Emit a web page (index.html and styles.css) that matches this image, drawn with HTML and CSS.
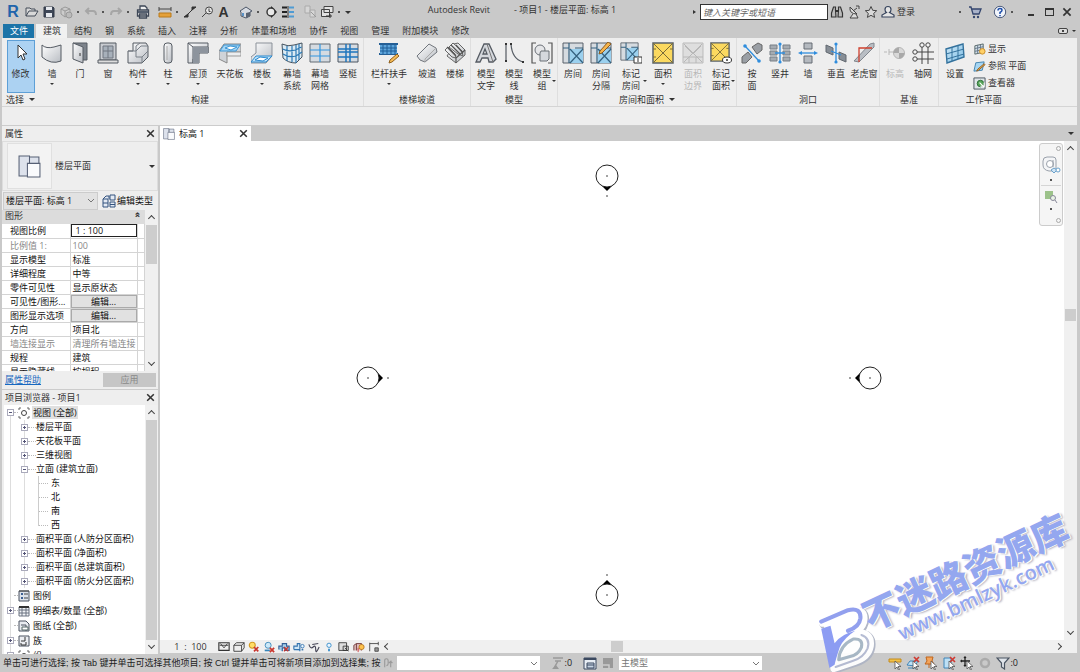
FILE: index.html
```html
<!DOCTYPE html>
<html lang="zh-CN">
<head>
<meta charset="utf-8">
<title>Autodesk Revit - 项目1 - 楼层平面: 标高 1</title>
<link rel="stylesheet" href="styles.css">
</head>
<body>
<svg class="sprite" aria-hidden="true">
  <defs>
    <linearGradient id="g" x1="0" y1="0" x2="1" y2="1"><stop offset="0" stop-color="#fff"/><stop offset="1" stop-color="#b9bdc3"/></linearGradient>
    <linearGradient id="gb" x1="0" y1="0" x2="1" y2="1"><stop offset="0" stop-color="#cfe9f8"/><stop offset="1" stop-color="#7fbfe6"/></linearGradient>
    <symbol id="open" viewBox="0 0 14 14"><path d="M1 11V3h4l1 1h4v2M1 11l3-5h9l-3 5z" fill="#d8d8d8" stroke="#444c58"/></symbol>
    <symbol id="save" viewBox="0 0 14 14"><path d="M2 2h9l1 1v9H2z" fill="#3e4757" stroke="#333b49"/><path d="M4 2h6v3H4zM4 8h6v4H4z" fill="#e6e9ee"/></symbol>
    <symbol id="sync" viewBox="0 0 14 14"><path d="M2 4l4-2 5 2v5l-5 3-4-3zM2 4l4 2 5-2M6 6v6" fill="#ccc" stroke="#999"/><circle cx="10" cy="10" r="3" fill="#bbb" stroke="#999"/></symbol>
    <symbol id="undo" viewBox="0 0 14 14"><path d="M5 3L2 6l3 3M2 6h7q3 0 3 4" fill="none" stroke="#a6a6a6" stroke-width="2"/></symbol>
    <symbol id="redo" viewBox="0 0 14 14"><path d="M9 3l3 3-3 3M12 6H5q-3 0-3 4" fill="none" stroke="#a6a6a6" stroke-width="2"/></symbol>
    <symbol id="print" viewBox="0 0 14 14"><path d="M4 5V1h5l2 2v2M1.500 5h11v6h-11zM3.500 9h7v4h-7z" fill="#eee" stroke="#3e4757" stroke-width="1.300"/><path d="M2 6h10v2H2z" fill="#566070"/></symbol>
    <symbol id="measure" viewBox="0 0 14 14"><path d="M1 4h12M1 2v4M13 2v4" stroke="#444" fill="none"/><path d="M1 8h12v4H1z" fill="#e5a13a" stroke="#b97a1c"/></symbol>
    <symbol id="dim" viewBox="0 0 14 14"><path d="M3 11L11 3" stroke="#333"/><path d="M1 12l4-3v3zM9 5V2h4z" fill="#333" stroke="#333"/></symbol>
    <symbol id="tag" viewBox="0 0 14 14"><circle cx="9" cy="5.500" r="3.500" fill="#e4e4e4" stroke="#444"/><path d="M6 8l-4 4M9 3.500v3h1.500" fill="none" stroke="#444"/></symbol>
    <symbol id="cube" viewBox="0 0 14 14"><path d="M1 6l6-4 6 4-2 1v4l-4 2-5-2V7z" fill="#d7dbe2" stroke="#4c5667"/><path d="M7 8v5l4-2V7z" fill="#5b6472"/><path d="M3 8h2v3H3z" fill="#5a91c5"/></symbol>
    <symbol id="section" viewBox="0 0 14 14"><path d="M7 1l6 6-6 6z" fill="#222"/><circle cx="7" cy="7" r="4" fill="#e8e8e8" stroke="#333" stroke-width="1.400"/></symbol>
    <symbol id="thin" viewBox="0 0 14 14"><path d="M1 2.500h5M1 7h5M1 11.500h5" stroke="#222" stroke-width="2"/><path d="M8 2.500h5M8 7h5M8 11.500h5" stroke="#4f9bd3" stroke-width="2"/><path d="M7 1v12" stroke="#333"/></symbol>
    <symbol id="closeh" viewBox="0 0 14 14"><path d="M2 1h5v7H2zM7 5h5v7H7z" fill="#d6d6d6" stroke="#aaa"/><path d="M8 7l5 5" stroke="#999"/></symbol>
    <symbol id="switchw" viewBox="0 0 14 14"><path d="M4 1.500h9v6H4zM1.500 4.500h8v7h-8z" fill="#e3e3e3" stroke="#444"/><path d="M6 11l6 0M10 9v4" stroke="#333"/></symbol>
    <symbol id="bino" viewBox="0 0 14 14"><path d="M3.500 2h2v3L6 12H1.500V8zM10.500 2h-2v3L8 12h4.500V8z" fill="#bbb" stroke="#333" stroke-width="1.200"/><path d="M5 6h4" stroke="#333" stroke-width="2"/></symbol>
    <symbol id="sat" viewBox="0 0 14 14"><path d="M3 2q-1 7 7 7zM6 6l4-3M6 9l-3 4h8l-2-4" fill="#ddd" stroke="#444"/><path d="M9 1h3v3" fill="none" stroke="#444"/></symbol>
    <symbol id="star" viewBox="0 0 14 14"><path d="M7 1.500l1.700 3.800 4 .4-3 2.700.9 4L7 10.300 3.400 12.400l.9-4-3-2.700 4-.4z" fill="#d9d9d9" stroke="#444"/></symbol>
    <symbol id="user" viewBox="0 0 14 14"><path d="M4 4.500a3 3 0 1 1 6 0q0 2-1.500 3l4.500 2.500v2H1v-2l4.500-2.500Q4 6.500 4 4.500z" fill="#e4e4e4" stroke="#36435c" stroke-width="1.200"/></symbol>
    <symbol id="cart" viewBox="0 0 14 14"><path d="M1 2h2l2 7h6l2-5H4" fill="#a9b3ca" stroke="#34466e" stroke-width="1.300"/><circle cx="6" cy="12" r="1.200" fill="#34466e"/><circle cx="10" cy="12" r="1.200" fill="#34466e"/></symbol>
    <symbol id="help" viewBox="0 0 14 14"><circle cx="7" cy="7" r="5.700" fill="#f2f5fb" stroke="#4b5b7c"/><path d="M5 5.500q0-2 2-2t2 1.700Q9 6.500 7 7.500V9M7 10v1.200" fill="none" stroke="#1e4eaa" stroke-width="1.500"/></symbol>
    <symbol id="x" viewBox="0 0 10 10"><path d="M2 2l6 6M8 2L2 8" stroke="#333" stroke-width="1.400"/></symbol>

    <symbol id="arrow" viewBox="0 0 22 22"><path d="M8 3v13l3-3 2 5 2-1-2-5h4z" fill="#fff" stroke="#333"/></symbol>
    <symbol id="wall" viewBox="0 0 22 22"><path d="M1 3q4 4 12 2l7-2v16q-10 4-19-4z" fill="url(#g)" stroke="#555b63"/></symbol>
    <symbol id="door" viewBox="0 0 22 22"><path d="M4 1h14v17h-4" fill="#7d838b" stroke="#555b63"/><path d="M4 1l10 4v16L4 17z" fill="url(#g)" stroke="#555b63"/><path d="M11 11v3" stroke="#333"/></symbol>
    <symbol id="window" viewBox="0 0 22 22"><path d="M3 1h16v17H3z" fill="#c9ccd1" stroke="#555b63"/><path d="M6 4h10v12H6zM11 4v12M6 9h10" fill="#a7b0ba" stroke="#707780"/><path d="M1 18h20v3H1z" fill="#ddd" stroke="#555b63"/></symbol>
    <symbol id="comp" viewBox="0 0 22 22"><path d="M6 1h13l2 3v11l-6 6H1V9h5z" fill="url(#g)" stroke="#555b63"/><path d="M1 9h8l5-5h7M9 9V4l4-3M9 9v6h6l6-6M15 15v6" fill="none" stroke="#7b8189"/></symbol>
    <symbol id="column" viewBox="0 0 22 22"><rect x="7" y="1" width="8" height="20" rx="3" fill="url(#g)" stroke="#555b63"/><path d="M10 4v14" stroke="#aaa"/></symbol>
    <symbol id="roof" viewBox="0 0 22 22"><path d="M1 1h20v10h-9v10H1z" fill="url(#g)" stroke="#555b63"/><path d="M21 5H6v16M1 1l5 4M6 21v-4M21 11V5" fill="none" stroke="#555b63"/><path d="M6 5h15v6h-9v10H6z" fill="#8d949d"/></symbol>
    <symbol id="ceil" viewBox="0 0 22 22"><path d="M0 9l5-7h17v8H8v11l-8-4z" fill="#cfd3d8" stroke="#888"/><path d="M8 10h14v4H8z" fill="#eceef0" stroke="#999"/><path d="M5 3h16l-4 6H1z" fill="#a4d5f5" stroke="#3c97d6"/><path d="M6 6l5-2 7 1-6 3z" fill="#fff" stroke="#3c97d6"/></symbol>
    <symbol id="floor" viewBox="0 0 22 22"><path d="M5 1h16v13l-6 7H0v-6l5-4z" fill="url(#g)" stroke="#8b9199"/><path d="M5 14h16l-6 6H0z" fill="#bfe2f8" stroke="#2d8bd0"/><path d="M4 18l5-3 8 1-5 3z" fill="#fff" stroke="#2d8bd0"/></symbol>
    <symbol id="csys" viewBox="0 0 22 22"><path d="M1 2q6 3 12 1l8-2v14l-6 6Q7 21 2 16z" fill="#dcebf4" stroke="#44525f"/><path d="M1.500 7q6 3 13 1l6-3M2 12q6 4 13 2l6-4M6 4v15M11 4v16M15 3v18M18 2v16" fill="none" stroke="#2c79b4" stroke-width="1.200"/></symbol>
    <symbol id="cgrid" viewBox="0 0 22 22"><path d="M1 2h20v18H1z" fill="#d5dbe1" stroke="#626a73"/><path d="M11 2v18M1 8h20M1 14h20" stroke="#3296df" stroke-width="1.200"/></symbol>
    <symbol id="mull" viewBox="0 0 22 22"><path d="M1 2h20v18H1z" fill="#d5dbe1" stroke="#4a5561"/><path d="M9 2v18M13 2v18M1 7h20M1 10h20M1 15h20" stroke="#1e76bd" stroke-width="1.500"/></symbol>
    <symbol id="rail" viewBox="0 0 22 22"><path d="M1 2h19M1 12h19" stroke="#245f96" stroke-width="2"/><path d="M2 3h17v9H2z" fill="#5ca4db"/><path d="M5 3v9M9 3v9M13 3v9M17 3v9M2 6h17M2 9h17" stroke="#1f5e98"/><path d="M19 12l2 2-7 6-3 1 1-3z" fill="#f5bc57" stroke="#90601d"/></symbol>
    <symbol id="ramp" viewBox="0 0 22 22"><path d="M1 14L13 2l7 4 1 4L9 20q-6-1-8-6z" fill="url(#g)" stroke="#70757c"/><path d="M9 20v-3L20 6" fill="none" stroke="#aaa"/></symbol>
    <symbol id="stair" viewBox="0 0 22 22"><path d="M1 8l3-3 7 7 1 4-4-1zM5 5l4-4 9 8 1 5-5-2zM10 2l4-1 7 7v5L12 21l-9-7 2-3" fill="url(#g)" stroke="#666"/><path d="M3 5l9 9M7 3l9 9M12 3l7 8M12 21v-5l9-8" fill="none" stroke="#555" stroke-width="1.200"/></symbol>
    <symbol id="mtext" viewBox="0 0 22 22"><path d="M1 20L9 2h5l7 15-3 3h-4l-1-4H7l-2 4zM8 12h4l-2-5z" fill="#d4d7dc" fill-rule="evenodd" stroke="#555b63" stroke-width="1.300"/><path d="M12 2l6 18" fill="none" stroke="#777"/></symbol>
    <symbol id="mline" viewBox="0 0 22 22"><path d="M3 2v17M8 2q1 15 12 18" fill="none" stroke="#555b63" stroke-width="1.200"/><path d="M2 2h2M2 19h2M7 2h2M19 20h2" stroke="#333" stroke-width="2"/></symbol>
    <symbol id="mgroup" viewBox="0 0 22 22"><path d="M5 1H1v20h4M17 1h4v20h-4" fill="none" stroke="#555" stroke-width="1.200"/><circle cx="9" cy="8" r="5" fill="#e5e6e8" stroke="#6b7077"/><path d="M10 9h8v8l-2 2H9v-8z" fill="#d5d8dd" stroke="#6b7077"/></symbol>
    <symbol id="room" viewBox="0 0 22 22"><path d="M1 1h20v20H1z" fill="#d6dbe0" stroke="#59616a"/><path d="M8 7h13v14H8z" fill="#9bd0ee"/><path d="M7 1v20M1 6h6M13 6h8M8 7l13 14M21 7L8 21" fill="none" stroke="#34617f" stroke-width="1.200"/></symbol>
    <symbol id="rsep" viewBox="0 0 22 22"><use href="#room"/><path d="M18 0l3 2-9 9-3 1 1-3z" fill="#f6b54d" stroke="#8d5b20"/></symbol>
    <symbol id="rtag" viewBox="0 0 22 22"><use href="#room" width="19" height="19"/><path d="M14 15h8v6h-8z" fill="#fff" stroke="#333"/><path d="M18 16v4" stroke="#333"/></symbol>
    <symbol id="area" viewBox="0 0 22 22"><path d="M1 1h20v20H1z" fill="#fbd95f" stroke="#59616a" stroke-width="1.500"/><path d="M1 1l20 20M21 1L1 21M1 7h3M18 7h3M1 15h3" stroke="#796c39"/></symbol>
    <symbol id="abound" viewBox="0 0 22 22"><path d="M1 1h20v20H1z" fill="#dedede" stroke="#bbb"/><path d="M2 2l18 18M20 2L2 20M1 15h20M7 15v6M14 15v6M3 4l8 8 8-8" fill="none" stroke="#b8b8b8"/></symbol>
    <symbol id="atag" viewBox="0 0 22 22"><use href="#area" width="20" height="20"/><ellipse cx="17" cy="18" rx="4.500" ry="3" fill="#fff" stroke="#333"/><circle cx="17" cy="18" r="1" fill="#333"/></symbol>
    <symbol id="oface" viewBox="0 0 22 22"><path d="M11 5l6-4 4 2v5l-5 4zM1 15l6-5 4 5-6 6H1z" fill="#9a9fa5" stroke="#666"/><path d="M4 4l14 15" stroke="#2f8ddd" stroke-width="1.300"/><circle cx="4" cy="4" r="1.800" fill="#2f8ddd"/><circle cx="18" cy="19" r="1.800" fill="#2f8ddd"/></symbol>
    <symbol id="shaft" viewBox="0 0 22 22"><path d="M1 3h7v4H1zM14 3h7v4h-7zM1 9h7v4H1zM14 9h7v4h-7zM1 15h7v4H1zM14 15h7v4h-7z" fill="#a5abb1" stroke="#777e86"/><path d="M11 2v18M6 11h10" stroke="#2f8ddd" stroke-width="1.300"/><circle cx="11" cy="2" r="1.600" fill="#2f8ddd"/><circle cx="11" cy="20" r="1.600" fill="#2f8ddd"/></symbol>
    <symbol id="owall" viewBox="0 0 22 22"><path d="M7 1h8v6H7zM7 14h8v7H7z" fill="#b4b9bf" stroke="#666d75"/><path d="M3 11h16" stroke="#2f8ddd" stroke-width="1.300"/><path d="M5 9l-4 2 4 2zM17 9l4 2-4 2z" fill="#2f8ddd"/></symbol>
    <symbol id="overt" viewBox="0 0 22 22"><path d="M1 3l7 3v7l-7-3zM14 10l7 3v7l-7-3z" fill="#878e96" stroke="#626970"/><path d="M11 2v18M6 9l10 4" stroke="#2f8ddd" stroke-width="1.300"/><circle cx="11" cy="2" r="1.600" fill="#2f8ddd"/><circle cx="11" cy="20" r="1.600" fill="#2f8ddd"/></symbol>
    <symbol id="dormer" viewBox="0 0 22 22"><path d="M1 19L17 2l4-1v4L6 20z" fill="#b9bec4" stroke="#81878e"/><path d="M6 20V6h13" fill="none" stroke="#d0402e" stroke-width="1.300"/></symbol>
    <symbol id="level" viewBox="0 0 22 22"><path d="M0 10h3M5 10h5M5 7v6" stroke="#b8b8b8"/><circle cx="15" cy="11" r="5.500" fill="#d8d8d8" stroke="#b5b5b5"/><path d="M15 5.500a5.500 5.500 0 0 0-5.500 5.500H15zM15 11h5.500a5.500 5.500 0 0 1-5.500 5.500z" fill="#a9a9a9"/></symbol>
    <symbol id="grid" viewBox="0 0 22 22"><path d="M10 5v17M16 5v17M5 10h17M5 17h17" stroke="#444"/><g fill="#f4f4f4" stroke="#444"><circle cx="10" cy="3" r="2.200"/><circle cx="16" cy="3" r="2.200"/><circle cx="3" cy="10" r="2.200"/><circle cx="3" cy="17" r="2.200"/></g></symbol>
    <symbol id="wset" viewBox="0 0 22 22"><path d="M2 7l17-5 1 13-17 6z" fill="url(#gb)" stroke="#34729d" stroke-width="1.400"/><path d="M2 12l18-5M3 17l17-5M8 5v14M14 3v14" stroke="#34729d"/></symbol>
    <symbol id="show" viewBox="0 0 14 14"><path d="M2 3l9-2v9l-9 2z" fill="#d3e0ea" stroke="#566"/><path d="M2 6l9-2M2 9l9-2M5 2v9M8 2v9" stroke="#678"/><circle cx="10" cy="9" r="3" fill="#ffd067" stroke="#c98b25"/></symbol>
    <symbol id="rplane" viewBox="0 0 14 14"><path d="M3 3l9-1-2 9-9 1z" fill="#a5d6f4" stroke="#4081ad"/><path d="M12 4l1 1-7 6-2 1 1-2z" fill="#f6b54d" stroke="#8d5b20"/></symbol>
    <symbol id="viewer" viewBox="0 0 14 14"><path d="M1 1h12v12H1z" fill="#dfe5e8" stroke="#47535c"/><circle cx="8" cy="7" r="3.500" fill="#58a65a" stroke="#2a6b35"/><path d="M7 6l5 5M8 10h4V6" fill="none" stroke="#fff" stroke-width="1.200"/></symbol>

    <symbol id="plan" viewBox="0 0 22 22"><path d="M1 1h10v19H1zM11 2h9v7h-9z" fill="#dde2ec" stroke="#566075"/><path d="M9 8h12v13H9z" fill="#fafbfd" stroke="#566075"/></symbol>
    <symbol id="etype" viewBox="0 0 14 14"><path d="M1 5h5v8H1zM1 5l3-3h3v3M8 1h5v5H8zM8 8h5v5H8zM8 10.500h5M1 9h5" fill="#e4eaf3" stroke="#33527e"/></symbol>
    <symbol id="views" viewBox="0 0 12 12"><path d="M3 1H1v2M9 1h2v2M1 9v2h2M11 9v2H9" fill="none" stroke="#666"/><circle cx="6" cy="6" r="2.500" fill="#fff" stroke="#444"/></symbol>
    <symbol id="legend" viewBox="0 0 12 12"><path d="M1 1h10v10H1z" fill="#dbe1ea" stroke="#4b5360"/><path d="M3 3h2v2H3zM3 7h2v2H3z" fill="#3c5f92"/><path d="M6 4h4M6 8h4M1 1h10" stroke="#444"/></symbol>
    <symbol id="sched" viewBox="0 0 12 12"><path d="M1 2h10v9H1zM1 5h10M1 8h10M4 2v9M8 2v9" fill="#f2f4f7" stroke="#6b7380"/><path d="M1 2h10" stroke="#333" stroke-width="2"/></symbol>
    <symbol id="sheet" viewBox="0 0 12 12"><path d="M1 1h7l3 3v7H1zM3 5h5v6" fill="#e8ebf0" stroke="#4b5360"/><path d="M4 7h6v3H4z" fill="#fff" stroke="#566"/></symbol>
    <symbol id="family" viewBox="0 0 12 12"><path d="M1 1h10v10H1z" fill="#eceef2" stroke="#4b5360"/><path d="M7 2v4H3M8 7v3H3V8" fill="none" stroke="#333"/></symbol>

    <symbol id="v1" viewBox="0 0 14 14"><path d="M1 2h12v9H1z" fill="#eee" stroke="#333" stroke-width="1.300"/><path d="M2 5h10M3 3l4 5 4-5" fill="none" stroke="#333"/></symbol>
    <symbol id="v2" viewBox="0 0 14 14"><path d="M1 5l3-3h9v6l-3 4H1zM1 5h9l3-3M10 5v7" fill="#eee" stroke="#333"/></symbol>
    <symbol id="v3" viewBox="0 0 14 14"><circle cx="5" cy="5" r="3.500" fill="#ffdd67" stroke="#d39a22" stroke-width="1.300"/><path d="M7 7l5 5M12 7l-5 5" stroke="#c9362d" stroke-width="2"/></symbol>
    <symbol id="v4" viewBox="0 0 14 14"><circle cx="6" cy="5" r="3.500" fill="#cce8f8" stroke="#3684b8"/><path d="M2 11h6" stroke="#3684b8" stroke-width="2"/><path d="M8 8l5 5M13 8l-5 5" stroke="#c9362d" stroke-width="2"/></symbol>
    <symbol id="v5" viewBox="0 0 14 14"><path d="M1 10V6h4V3h5v3h3v5H8V8H5v4" fill="#a5d0ec" stroke="#345f96" stroke-width="1.300"/><path d="M7 7l5 5M12 7l-5 5" stroke="#c9362d" stroke-width="1.500"/></symbol>
    <symbol id="v6" viewBox="0 0 14 14"><path d="M1 10V6h4V3h3v9M1 10h7" fill="#cfe6f6" stroke="#3473ae" stroke-width="1.300"/><circle cx="11" cy="6" r="2" fill="#eaf6ff" stroke="#3473ae"/><path d="M10 9h2v2h-2z" fill="#3473ae"/></symbol>
    <symbol id="v7" viewBox="0 0 14 14"><path d="M1 4q2 6 5 3t3 3 4-3M5 4l7-1" fill="none" stroke="#445" stroke-width="1.300"/></symbol>
    <symbol id="v8" viewBox="0 0 14 14"><circle cx="7" cy="5" r="2.500" fill="#eaf6ff" stroke="#2d87c7"/><path d="M6 9h2v3H6z" fill="#2d87c7"/></symbol>
    <symbol id="v9" viewBox="0 0 14 14"><path d="M1 2h9v9H1zM6 6h6v5H6z" fill="#ddd" stroke="#333"/><path d="M8 8l4 4" stroke="#333"/></symbol>
    <symbol id="v10" viewBox="0 0 14 14"><path d="M1 11V5l3-2h6v8M4 3v8" fill="#dbb" stroke="#6b3030"/><circle cx="10" cy="7" r="3" fill="#ffc34f" stroke="#b8771b"/><path d="M6 8v5" stroke="#c33"/></symbol>
    <symbol id="v11" viewBox="0 0 14 14"><path d="M2 12V2M2 3h10M12 1v4M8 8h4v4H8z" fill="#999" stroke="#444"/></symbol>

    <symbol id="wheel" viewBox="0 0 20 20"><path d="M2 6q0-4 4-4h6q3 0 3 3v9l-4 2H8q-6-1-6-6z" fill="#f4f5f7" stroke="#9aa1ab"/><circle cx="9" cy="9" r="3.500" fill="#fff" stroke="#9aa1ab"/><path d="M12 5v7" stroke="#9aa1ab"/><path d="M10 15l3-2 3 2-3 3z" fill="#cfe4f5" stroke="#6ba1ca"/><circle cx="17" cy="15" r="2" fill="#fff" stroke="#6ba1ca"/></symbol>
    <symbol id="zoomr" viewBox="0 0 14 14"><path d="M1 1h8v8H1z" fill="#9cc28a"/><circle cx="9" cy="8" r="2.500" fill="#eaf4e6" stroke="#889"/><path d="M11 10l2 3" stroke="#889"/></symbol>

    <symbol id="s1" viewBox="0 0 14 14"><path d="M2 12V4q0-2 2-2t2 2v4q0 2-2 2M9 12V5l-2 2M9 5l2 2" fill="none" stroke="#999" stroke-width="1.300"/></symbol>
    <symbol id="s2" viewBox="0 0 14 14"><path d="M2 2h10M4 5h6M3 12l4-7" stroke="#999" fill="none" stroke-width="1.500"/><path d="M1 13l4-4 3 4z" fill="#999"/></symbol>
    <symbol id="s3" viewBox="0 0 14 14"><path d="M1 2h12v11H1z" fill="#e8edf4" stroke="#3b4960"/><path d="M1 3h12" stroke="#3b4960" stroke-width="2"/><path d="M4 7h7v5H4zM4 9h7" fill="#c9d6e5" stroke="#3b4960"/></symbol>
    <symbol id="s4" viewBox="0 0 14 14"><path d="M2 2h10v10H2z" fill="#999"/><path d="M2 9h6v4" fill="none" stroke="#ccc" stroke-width="1.500"/></symbol>
    <symbol id="cur" viewBox="0 0 14 14"><path d="M7 5v8l2-2 1.500 3 1-.5-1.500-3h3z" fill="#fff" stroke="#555" stroke-width=".8"/></symbol>
    <symbol id="t1" viewBox="0 0 14 14"><path d="M1 3h12v3H1z" fill="#f1c24a" stroke="#c48a1a"/><use href="#cur"/></symbol>
    <symbol id="t2" viewBox="0 0 14 14"><path d="M1 9l3-4h8l-3 5zM2 12h8" fill="#bde0f5" stroke="#3f84b8"/><path d="M8 1l5 5M13 1L8 6" stroke="#cf3a32" stroke-width="1.700"/><use href="#cur"/></symbol>
    <symbol id="t3" viewBox="0 0 14 14"><path d="M2 1h7L8 5l2 3H1l2-3zM5 8v4" fill="#f3a45b" stroke="#c0651b"/><use href="#cur"/></symbol>
    <symbol id="t4" viewBox="0 0 14 14"><path d="M2 2h7v10H2z" fill="#bde0f5" stroke="#3f84b8"/><path d="M8 1l5 5M13 1L8 6" stroke="#cf3a32" stroke-width="1.700"/><use href="#cur"/></symbol>
    <symbol id="t5" viewBox="0 0 14 14"><path d="M5 1v9M1 5h9M4 2l1-1 1 1M4 9l1 1 1-1M2 4L1 5l1 1" fill="none" stroke="#222" stroke-width="1.300"/><use href="#cur"/></symbol>
    <symbol id="t6" viewBox="0 0 14 14"><circle cx="7" cy="7" r="4" fill="none" stroke="#aaa" stroke-width="2.500"/></symbol>
    <symbol id="t7" viewBox="0 0 14 14"><path d="M1 2h12L8.500 7v6l-3-2V7z" fill="#dfe4ea" stroke="#4a5462" stroke-width="1.200"/></symbol>
    <symbol id="elev" viewBox="0 0 44 44"><path d="M13 28h18L22 37z" fill="#000"/><circle cx="22" cy="22" r="11" fill="#fff" stroke="#222"/><path d="M21 22h2M21 42h2" stroke="#444"/></symbol>
  </defs>
</svg>

<header class="titlebar">
  <div class="qat">
    <button class="qb logo" aria-label="Revit">R</button>
    <button class="qb" aria-label="打开"><svg><use href="#open"/></svg></button>
    <button class="qb" aria-label="保存"><svg><use href="#save"/></svg></button>
    <button class="qb" aria-label="同步"><svg><use href="#sync"/></svg></button><i class="dd"></i>
    <button class="qb" aria-label="放弃"><svg><use href="#undo"/></svg></button><i class="dd"></i>
    <button class="qb" aria-label="重做"><svg><use href="#redo"/></svg></button><i class="dd"></i>
    <button class="qb near" aria-label="打印"><svg><use href="#print"/></svg></button>
    <button class="qb group" aria-label="测量"><svg><use href="#measure"/></svg></button><i class="dd"></i>
    <button class="qb" aria-label="尺寸标注"><svg><use href="#dim"/></svg></button>
    <button class="qb" aria-label="标记"><svg><use href="#tag"/></svg></button>
    <button class="qb letter" aria-label="文字">A</button>
    <button class="qb group" aria-label="三维视图"><svg><use href="#cube"/></svg></button><i class="dd"></i>
    <button class="qb" aria-label="剖面"><svg><use href="#section"/></svg></button>
    <button class="qb" aria-label="细线"><svg><use href="#thin"/></svg></button>
    <button class="qb group" aria-label="关闭隐藏窗口"><svg><use href="#closeh"/></svg></button>
    <button class="qb" aria-label="切换窗口"><svg><use href="#switchw"/></svg></button><i class="dd"></i>
    <i class="caret wide near"></i>
  </div>
  <h1 class="title"><span>Autodesk Revit</span><span>- 项目1 - 楼层平面: 标高 1</span></h1>
  <div class="infocenter">
    <i class="side"></i>
    <input class="search" type="text" placeholder="键入关键字或短语" aria-label="搜索">
    <button class="qb" aria-label="查找"><svg><use href="#bino"/></svg></button>
    <button class="qb" aria-label="通讯中心"><svg><use href="#sat"/></svg></button>
    <button class="qb" aria-label="收藏"><svg><use href="#star"/></svg></button>
    <button class="login"><svg><use href="#user"/></svg>登录</button>
    <i class="dd"></i>
    <button class="qb near" aria-label="商店"><svg><use href="#cart"/></svg></button>
    <button class="qb far" aria-label="帮助"><svg><use href="#help"/></svg></button><i class="dd"></i>
    <div class="winbtns">
      <button class="wb" aria-label="最小化"><span class="min"></span></button>
      <button class="wb" aria-label="最大化"><span class="max"></span></button>
      <button class="wb" aria-label="关闭"><svg><use href="#x"/></svg></button>
    </div>
  </div>
</header>

<nav class="tabs">
  <button class="tab file">文件</button><button class="tab active">建筑</button><button class="tab">结构</button><button class="tab">钢</button><button class="tab">系统</button><button class="tab">插入</button><button class="tab">注释</button><button class="tab">分析</button><button class="tab">体量和场地</button><button class="tab">协作</button><button class="tab">视图</button><button class="tab">管理</button><button class="tab">附加模块</button><button class="tab">修改</button>
  <button class="collapse" aria-label="最小化功能区"><span></span><i class="caret"></i></button>
</nav>

<section class="ribbon">
  <div class="panel select-panel">
    <div class="tools"><button class="tool on"><svg><use href="#arrow"/></svg>修改</button></div>
    <div class="ptitle">选择<i class="caret wide"></i></div>
  </div>
  <div class="panel">
    <div class="tools">
      <button class="tool"><svg><use href="#wall"/></svg>墙<i class="caret"></i></button>
      <button class="tool"><svg><use href="#door"/></svg>门</button>
      <button class="tool"><svg><use href="#window"/></svg>窗</button>
      <button class="tool w32"><svg><use href="#comp"/></svg>构件<i class="caret"></i></button>
      <button class="tool"><svg><use href="#column"/></svg>柱<i class="caret"></i></button>
      <button class="tool w32"><svg><use href="#roof"/></svg>屋顶<i class="caret"></i></button>
      <button class="tool w32"><svg><use href="#ceil"/></svg>天花板</button>
      <button class="tool w32"><svg><use href="#floor"/></svg>楼板<i class="caret"></i></button>
      <button class="tool"><svg><use href="#csys"/></svg>幕墙<br>系统</button>
      <button class="tool"><svg><use href="#cgrid"/></svg>幕墙<br>网格</button>
      <button class="tool"><svg><use href="#mull"/></svg>竖梃</button>
    </div>
    <div class="ptitle">构建</div>
  </div>
  <div class="panel">
    <div class="tools">
      <button class="tool w48"><svg><use href="#rail"/></svg>栏杆扶手<i class="caret"></i></button>
      <button class="tool"><svg><use href="#ramp"/></svg>坡道</button>
      <button class="tool"><svg><use href="#stair"/></svg>楼梯</button>
    </div>
    <div class="ptitle">楼梯坡道</div>
  </div>
  <div class="panel">
    <div class="tools">
      <button class="tool"><svg><use href="#mtext"/></svg>模型<br>文字</button>
      <button class="tool"><svg><use href="#mline"/></svg>模型<br>线</button>
      <button class="tool"><svg><use href="#mgroup"/></svg>模型<br>组<i class="caret corner"></i></button>
    </div>
    <div class="ptitle">模型</div>
  </div>
  <div class="panel">
    <div class="tools">
      <button class="tool"><svg><use href="#room"/></svg>房间</button>
      <button class="tool"><svg><use href="#rsep"/></svg>房间<br>分隔</button>
      <button class="tool w32"><svg><use href="#rtag"/></svg>标记<br>房间<i class="caret corner"></i></button>
      <button class="tool w32"><svg><use href="#area"/></svg>面积<i class="caret"></i></button>
      <button class="tool" disabled><svg><use href="#abound"/></svg>面积<br>边界</button>
      <button class="tool"><svg><use href="#atag"/></svg>标记<br>面积<i class="caret corner"></i></button>
    </div>
    <div class="ptitle">房间和面积<i class="caret wide"></i></div>
  </div>
  <div class="panel">
    <div class="tools">
      <button class="tool"><svg><use href="#oface"/></svg>按<br>面</button>
      <button class="tool"><svg><use href="#shaft"/></svg>竖井</button>
      <button class="tool"><svg><use href="#owall"/></svg>墙</button>
      <button class="tool"><svg><use href="#overt"/></svg>垂直</button>
      <button class="tool"><svg><use href="#dormer"/></svg>老虎窗</button>
    </div>
    <div class="ptitle">洞口</div>
  </div>
  <div class="panel">
    <div class="tools">
      <button class="tool" disabled><svg><use href="#level"/></svg>标高</button>
      <button class="tool"><svg><use href="#grid"/></svg>轴网</button>
    </div>
    <div class="ptitle">基准</div>
  </div>
  <div class="panel work">
    <div class="tools">
      <button class="tool"><svg><use href="#wset"/></svg>设置</button>
      <div class="stack">
        <button><svg><use href="#show"/></svg>显示</button>
        <button><svg><use href="#rplane"/></svg>参照 平面</button>
        <button><svg><use href="#viewer"/></svg>查看器</button>
      </div>
    </div>
    <div class="ptitle">工作平面</div>
  </div>
</section>
<div class="optionsbar"></div>

<main class="workspace">
  <aside class="dock">
    <section class="props">
      <h2 class="ptop">属性<button aria-label="关闭属性"><svg><use href="#x"/></svg></button></h2>
      <div class="typesel"><span class="thumb"><svg><use href="#plan"/></svg></span><span class="tname">楼层平面</span><i class="caret wide"></i></div>
      <div class="instance">
        <select aria-label="视图"><option>楼层平面: 标高 1</option></select>
        <button class="edittype"><svg><use href="#etype"/></svg>编辑类型</button>
      </div>
      <div class="proplist">
        <div class="proparea">
          <div class="cat">图形<span>«</span></div>
          <table>
            <tr><th scope="row">视图比例</th><td><input class="scale" value="1 : 100" aria-label="视图比例"></td><td></td></tr>
            <tr class="dim"><th scope="row">比例值 1:</th><td>100</td><td></td></tr>
            <tr><th scope="row">显示模型</th><td>标准</td><td></td></tr>
            <tr><th scope="row">详细程度</th><td>中等</td><td></td></tr>
            <tr><th scope="row">零件可见性</th><td>显示原状态</td><td></td></tr>
            <tr><th scope="row">可见性/图形...</th><td><button>编辑...</button></td><td></td></tr>
            <tr><th scope="row">图形显示选项</th><td><button>编辑...</button></td><td></td></tr>
            <tr><th scope="row">方向</th><td>项目北</td><td></td></tr>
            <tr class="dim"><th scope="row">墙连接显示</th><td>清理所有墙连接</td><td></td></tr>
            <tr><th scope="row">规程</th><td>建筑</td><td></td></tr>
            <tr><th scope="row">显示隐藏线</th><td>按规程</td><td></td></tr>
          </table>
        </div>
        <div class="vscroll"><i class="chev up"></i><span class="bar short"></span><i class="chev down"></i></div>
      </div>
      <div class="pfoot"><a href="#help-props">属性帮助</a><button disabled>应用</button></div>
    </section>
    <section class="browser">
      <h2 class="ptop">项目浏览器 - 项目1<button aria-label="关闭浏览器"><svg><use href="#x"/></svg></button></h2>
      <div class="treebox">
        <ul class="tree">
          <li><div class="row"><b class="tg minus"></b><s></s><svg><use href="#views"/></svg><span class="sel">视图 (全部)</span></div>
            <ul class="l2">
              <li><div class="row"><b class="tg"></b><s></s>楼层平面</div></li>
              <li><div class="row"><b class="tg"></b><s></s>天花板平面</div></li>
              <li><div class="row"><b class="tg"></b><s></s>三维视图</div></li>
              <li><div class="row"><b class="tg minus"></b><s></s>立面 (建筑立面)</div>
                <ul class="l3">
                  <li><div class="row"><s></s>东</div></li>
                  <li><div class="row"><s></s>北</div></li>
                  <li><div class="row"><s></s>南</div></li>
                  <li><div class="row"><s></s>西</div></li>
                </ul>
              </li>
              <li><div class="row"><b class="tg"></b><s></s>面积平面 (人防分区面积)</div></li>
              <li><div class="row"><b class="tg"></b><s></s>面积平面 (净面积)</div></li>
              <li><div class="row"><b class="tg"></b><s></s>面积平面 (总建筑面积)</div></li>
              <li><div class="row"><b class="tg"></b><s></s>面积平面 (防火分区面积)</div></li>
            </ul>
          </li>
          <li><div class="row"><b class="tg none"></b><s></s><svg><use href="#legend"/></svg><span>图例</span></div></li>
          <li><div class="row"><b class="tg"></b><s></s><svg><use href="#sched"/></svg><span>明细表/数量 (全部)</span></div></li>
          <li><div class="row"><b class="tg none"></b><s></s><svg><use href="#sheet"/></svg><span>图纸 (全部)</span></div></li>
          <li><div class="row"><b class="tg"></b><s></s><svg><use href="#family"/></svg><span>族</span></div></li>
          <li><div class="row"><b class="tg"></b><s></s><svg><use href="#views"/></svg><span>组</span></div></li>
        </ul>
        <div class="vscroll"><i class="chev up"></i><span class="bar long"></span><i class="chev down"></i></div>
      </div>
    </section>
  </aside>

  <section class="view">
    <div class="viewtabs">
      <div class="viewtab"><svg class="vt"><use href="#plan"/></svg>标高 1<button aria-label="关闭视图"><svg><use href="#x"/></svg></button></div>
      <i class="caret wide"></i>
    </div>
    <div class="viewbody">
      <div class="canvas">
        <svg class="mark north"><use href="#elev"/></svg>
        <svg class="mark west"><use href="#elev"/></svg>
        <svg class="mark east"><use href="#elev"/></svg>
        <svg class="mark south"><use href="#elev"/></svg>
        <div class="navbar">
          <i class="knob"></i><button aria-label="控制盘"><svg class="wheel"><use href="#wheel"/></svg></button><i class="dd"></i>
          <hr><button aria-label="缩放"><svg><use href="#zoomr"/></svg></button><i class="dd"></i><i class="knob last"></i>
        </div>
      </div>
      <div class="vscroll"><i class="chev up"></i><span class="bar mid"></span><i class="chev down"></i></div>
    </div>
    <div class="viewctl">
      <button class="vscale">1 &nbsp;: &nbsp;100</button>
      <div class="vicons">
        <svg><use href="#v1"/></svg><svg><use href="#v2"/></svg><svg><use href="#v3"/></svg><svg><use href="#v4"/></svg><svg><use href="#v5"/></svg><svg><use href="#v6"/></svg><svg><use href="#v7"/></svg><svg><use href="#v8"/></svg><svg><use href="#v9"/></svg><svg><use href="#v10"/></svg><svg><use href="#v11"/></svg>
      </div>
      <div class="hscroll"><i class="chev left"></i><div class="track"><span></span></div><i class="chev right"></i></div>
    </div>
  </section>
</main>

<footer class="status">
  <span class="msg">单击可进行选择; 按 Tab 键并单击可选择其他项目; 按 Ctrl 键并单击可将新项目添加到选择集; 按</span>
  <svg class="link"><use href="#s1"/></svg>
  <select aria-label="工作集"><option></option></select>
  <span class="count"><svg><use href="#s2"/></svg>:0</span>
  <svg><use href="#s3"/></svg>
  <svg><use href="#s4"/></svg>
  <select aria-label="设计选项"><option>主模型</option></select>
  <div class="filters">
    <svg><use href="#t1"/></svg><svg><use href="#t2"/></svg><svg><use href="#t3"/></svg><svg><use href="#t4"/></svg><svg><use href="#t5"/></svg><svg><use href="#t6"/></svg><span class="count"><svg><use href="#t7"/></svg>:0</span>
  </div>
</footer>

<div class="watermark">
  <svg class="wlogo" viewBox="0 0 58 64">
    <g stroke-linejoin="round" stroke-linecap="round" fill="none">
      <path d="M4 19L31 6q14-3 14 8 0 8-8 13 16 0 14 14-2 11-15 15L15 63 7 26" stroke="#aeb4c4" stroke-width="7" transform="translate(1 1)"/>
      <path d="M4 19L31 6q14-3 14 8 0 8-8 13 16 0 14 14-2 11-15 15L15 63 7 26" stroke="#fff" stroke-width="6" fill="#fff"/>
      <path d="M3 17L29 6q13-3 12 8-1 8-12 12" stroke="#8d9bee" stroke-width="4"/>
      <path d="M3 24l9-3 4 17q7-9 20-12-11 7-15 16-4 12-5 17l-5 3z" fill="#8798f3"/>
      <path d="M42 30q9 3 6 13-4 9-14 12l-17 6" stroke="#b3bad2" stroke-width="2"/>
      <path d="M20 54q1-14 14-20 10-1 8 8-3 7-11 9z" stroke="#a5b6c4" stroke-width="3"/>
    </g>
  </svg>
  <div class="wtext">不迷路资源库</div>
  <div class="wurl">www.bmlzyk.com</div>
</div>
</body>
</html>
```
FILE: styles.css
```css
* { box-sizing: border-box; }
body {
  margin: 0;
  height: 100vh;
  display: flex;
  flex-direction: column;
  position: relative;
  overflow: hidden;
  background: #c9c9c9;
  color: #333;
  font: 9px/12px "Open Sans", "Noto Sans CJK SC", sans-serif;
}
button, input, select { font: inherit; color: inherit; border: 0; padding: 0; margin: 0; background: none; }
h1, h2 { margin: 0; font: inherit; }
ul { margin: 0; padding: 0; list-style: none; }
svg { display: block; width: 14px; height: 14px; flex: none; }
.sprite { position: absolute; width: 0; height: 0; }

.caret { display: block; width: 0; height: 0; border: 2px solid transparent; border-top-color: #333; border-bottom: 0; flex: none; }
.caret.wide { border-width: 3px; border-bottom: 0; }
.dd { flex: none; width: 8px; height: 2px; background: linear-gradient(#555, #555) center / 2px 2px no-repeat; }

/* Title bar */
.titlebar { display: flex; align-items: center; height: 24px; padding: 0 4px 0 3px; flex: none; }
.qat { display: flex; align-items: center; }
.qb { width: 17px; height: 18px; display: flex; align-items: center; justify-content: center; flex: none; }
.qb.group { margin-left: 5px; }
.near { margin-left: 2px; }
.qb.far { margin-left: 8px; }
.logo { font: bold 16px/18px "Liberation Sans", sans-serif; color: #2064ab; width: 20px; }
.letter { font: bold 14px/18px "Liberation Sans", sans-serif; color: #333; }
.title { flex: 1; display: flex; justify-content: center; gap: 24px; white-space: nowrap; padding-bottom: 4px; }
.infocenter { display: flex; align-items: center; }
.side { border: 2px solid transparent; border-left: 3px solid #333; border-right: 0; margin-right: 4px; }
.search { width: 128px; height: 16px; border: 1px solid #333; background: #fff; padding: 0 2px; font-style: italic; margin-right: 1px; }
.search::placeholder { color: #666; opacity: 1; }
.login { display: flex; align-items: center; gap: 2px; margin: 0 41px 0 1px; }
.winbtns { display: flex; margin-left: 6px; }
.wb { width: 18px; height: 18px; display: flex; align-items: center; justify-content: center; }
.wb svg { width: 12px; height: 12px; }
.min { width: 6px; height: 2px; background: #333; margin-top: 6px; }
.max { width: 9px; height: 8px; border: 1px solid #333; border-top-width: 2px; }

/* Ribbon tabs */
.tabs { display: flex; height: 14px; flex: none; padding: 0 4px 0 3px; }
.tab { padding: 0 6px 0 7px; line-height: 14px; }
.tab.file { background: #1c74a8; color: #fff; margin-right: 2px; }
.tab.active { background: #f1f1f1; }
.collapse { margin-left: auto; display: flex; align-items: center; gap: 4px; }
.collapse span { width: 10px; height: 6px; border: 1px solid #444; border-radius: 2px; background: linear-gradient(#444, #444) center / 2px 2px no-repeat #ddd; }

/* Ribbon */
.ribbon { display: flex; flex: none; margin: 0 3px 0 2px; background: #eee; border-bottom: 1px solid #d4d4d4; }
.panel { display: flex; flex-direction: column; align-items: center; border-right: 1px solid #dedede; padding: 0 1px; }
.panel:last-child { border-right: 0; }
.select-panel { padding: 0 2px 0 4px; border-right: 0; }
.tools { display: flex; height: 55px; }
.tool { position: relative; display: flex; flex-direction: column; align-items: center; width: 28px; height: 53px; margin-top: 2px; padding-top: 2px; text-align: center; white-space: nowrap; }
.tool svg { width: 22px; height: 22px; margin-bottom: 4px; }
.tool .caret { margin-top: 3px; }
.tool .corner { position: absolute; right: 0; bottom: 11px; }
.tool:disabled { color: #b8b8b8; }
.tool.on { background: #acd2f2; border: 1px solid #5d9fd6; padding-top: 1px; }
.w32 { width: 32px; }
.w48 { width: 48px; }
.ptitle { display: flex; align-items: center; gap: 5px; height: 13px; }
.work { padding: 0 0 0 2px; }
.stack { display: flex; flex-direction: column; gap: 3px; padding: 4px 0 0 4px; }
.stack button { display: flex; align-items: center; gap: 2px; height: 14px; }
.stack svg { width: 13px; height: 13px; }
.optionsbar { flex: none; height: 19px; margin: 0 3px 0 2px; background: #eee; border-bottom: 1px solid #ccc; }

/* Docked palettes */
.workspace { flex: 1; min-height: 0; display: flex; padding: 0 3px 0 2px; }
.dock { width: 156px; margin-right: 2px; flex: none; display: flex; flex-direction: column; background: #eee; }
.ptop { display: flex; align-items: center; justify-content: space-between; height: 15px; padding: 0 1px 0 3px; }
.ptop button { width: 12px; height: 12px; }
.ptop svg, .viewtab button svg { width: 11px; height: 11px; }
.typesel { display: flex; align-items: center; height: 50px; padding: 0 2px 0 4px; border: 1px solid #ddd; }
.thumb { display: flex; align-items: center; justify-content: center; width: 45px; height: 46px; border: 1px solid #e0e0e0; background: #f3f3f3; }
.thumb svg { width: 23px; height: 23px; }
.tname { flex: 1; padding-left: 3px; }
.instance { display: flex; align-items: center; height: 19px; padding-left: 1px; }
.instance select { width: 95px; height: 18px; color: #111; }
select { appearance: none; background: #e2e2e2; border: 1px solid #ccc; padding: 0 2px; background-image: linear-gradient(45deg, transparent 45%, #777 45% 60%, transparent 60%), linear-gradient(-45deg, transparent 45%, #777 45% 60%, transparent 60%); background-size: 3px 3px; background-repeat: no-repeat; background-position: right 6px center, right 3px center; }
.edittype { display: flex; align-items: center; gap: 1px; margin-left: 4px; color: #111; }
.proplist { display: flex; height: 161px; }
.proparea { flex: 1; overflow: hidden; background: #fff; }
.cat { display: flex; justify-content: space-between; height: 14px; padding: 0 3px; background: #dcdcdc; }
.cat span { width: 8px; height: 12px; font-weight: bold; transform: rotate(90deg); }
.proparea table { width: 100%; table-layout: fixed; border-collapse: collapse; color: #111; }
.proparea tr { height: 14px; }
.proparea th, .proparea td { padding: 0 0 0 2px; border-bottom: 1px solid #d4d4d4; border-right: 1px solid #d4d4d4; height: 14px; line-height: 13px; text-align: left; font-weight: normal; white-space: nowrap; }
.proparea th { width: 68px; padding-left: 8px; }
.proparea td { width: 67px; }
.proparea td:last-child { width: auto; }
.dim { color: #888; }
.proparea td:has(input), .proparea td:has(button) { padding: 0; }
.scale { display: block; width: 100%; height: 13px; padding: 0 4px; border: 1px solid #222; }
.proparea button { display: block; width: 100%; height: 13px; line-height: 11px; background: #e1e1e1; border: 1px solid #aaa; }
.pfoot { display: flex; align-items: center; justify-content: space-between; height: 18px; padding: 1px 2px 2px 3px; }
.pfoot a { color: #1768c0; }
.pfoot button { width: 53px; height: 14px; background: #c6c6c6; color: #8a8a8a; }
.browser { flex: 1; min-height: 0; display: flex; flex-direction: column; border-top: 1px solid #ccc; }
.treebox { flex: 1; min-height: 0; display: flex; background: #fff; margin-left: 2px; }
.tree { flex: 1; overflow: hidden; color: #111; background: linear-gradient(#ddd, #ddd) 6px 8px / 1px 100% no-repeat; }
.row { display: flex; align-items: center; height: 15px; padding-left: 3px; white-space: nowrap; }
.l2 { background: linear-gradient(#ddd, #ddd) 20px 0 / 1px 100% no-repeat; }
.l2 .row { height: 14px; padding-left: 17px; }
.l3 { background: linear-gradient(#ccc, #ccc) 34px 0 / 1px 50px no-repeat; }
.l3 .row { padding-left: 35px; }
.tg { width: 7px; height: 7px; border: 1px solid #aab; background: linear-gradient(#557, #557) center / 3px 1px no-repeat, linear-gradient(#557, #557) center / 1px 3px no-repeat #fff; }
.tg.minus { background: linear-gradient(#557, #557) center / 3px 1px no-repeat #fff; }
.tg.none { border: 0; background: none; }
.row s { width: 4px; border-top: 1px dotted #bbb; }
.l2 .row s { width: 8px; }
.l3 .row s { width: 9px; margin-right: 3px; }
.tree svg { width: 12px; height: 12px; margin-right: 2px; }
.row span { padding: 0 1px; line-height: 13px; }
.row .sel { background: #e0e0e0; }

/* Scroll bars */
.vscroll { width: 13px; flex: none; display: flex; flex-direction: column; align-items: center; background: #f0f0f0; padding: 6px 0; }
.bar { width: 11px; background: #cdcdcd; margin: 4px 0 auto; }
.bar.short { height: 39px; }
.bar.long { flex: 1; margin-bottom: 3px; }
.bar.mid { height: 12px; margin: auto; transform: translateY(-76px); }
.chev { width: 5px; height: 5px; border: solid #444; border-width: 1px 0 0 1px; flex: none; }
.up { transform: rotate(45deg); }
.down { transform: rotate(225deg); }
.left { transform: rotate(-45deg); }
.right { transform: rotate(135deg); }

/* Drawing view */
.view { flex: 1; min-width: 0; display: flex; flex-direction: column; }
.viewtabs { display: flex; align-items: center; justify-content: space-between; height: 15px; padding-right: 3px; background: #cacaca; }
.viewtab { display: flex; align-items: center; width: 91px; height: 15px; padding: 0 2px 0 3px; gap: 4px; background: #fff; color: #111; }
.viewtab .vt { width: 12px; height: 12px; }
.viewtab button { margin-left: auto; }
.viewbody { flex: 1; min-height: 0; display: flex; }
.canvas { flex: 1; position: relative; background: #fff; }
.mark { position: absolute; width: 44px; height: 44px; margin: -22px; }
.north { left: 49.400%; top: 7%; }
.south { left: 49.500%; top: 91%; transform: rotate(180deg); }
.west { left: 23%; top: 47.500%; transform: rotate(-90deg); }
.east { left: 78.500%; top: 47.500%; transform: rotate(90deg); }
.navbar { position: absolute; right: 1px; top: 2px; width: 24px; height: 83px; border: 1px solid #ccc; border-radius: 3px; background: #f5f5f5; display: flex; flex-direction: column; align-items: center; gap: 4px; padding: 2px 1px; }
.navbar hr { width: 100%; margin: 0; border: 0; border-top: 1px solid #d5d5d5; }
.navbar .wheel { width: 20px; height: 20px; }
.knob { width: 5px; height: 5px; border: 1px solid #aaa; border-radius: 3px; align-self: flex-end; flex: none; }
.knob.last { margin-top: auto; }
.viewctl { display: flex; align-items: center; height: 13px; flex: none; background: #f0f0f0; margin-bottom: 1px; }
.vscale { width: 57px; padding-left: 4px; white-space: nowrap; }
.vicons { display: flex; gap: 1px; }
.vicons svg { height: 12px; }
.hscroll { flex: 1; display: flex; align-items: center; padding: 0 16px 0 4px; }
.track { flex: 1; height: 12px; margin: 0 4px; }
.track span { display: block; width: 12px; height: 11px; margin-left: 33%; background: #cdcdcd; }

/* Status bar */
.status { display: flex; align-items: center; height: 18px; flex: none; padding: 0 62px 0 3px; gap: 4px; color: #222; }
.msg { flex: none; white-space: nowrap; font-family: "Liberation Sans", "Noto Sans CJK SC", sans-serif; }
.link { width: 12px; margin: 0 -2px; }
.status select { width: 143px; height: 14px; background-color: #fff; border: 0; color: #777; }
.count { display: flex; align-items: center; margin: 0 7px; }
.filters { display: flex; align-items: center; gap: 4px; margin-left: auto; }
.filters .count { margin: 0; }

/* Watermark over the lower right corner */
.watermark { position: absolute; right: 0; bottom: 0; width: 262px; height: 172px; opacity: .95; pointer-events: none; color: #8fa3ef; white-space: nowrap; text-shadow: 1px 1px 0 #fff, 2px 2px 2px #aab; }
.wlogo { position: absolute; left: 0; bottom: 2px; width: 60px; height: 66px; overflow: visible; }
.wtext, .wurl { position: absolute; transform: rotate(-25deg); transform-origin: 0 100%; }
.wtext { left: 55px; bottom: 35px; font: 900 37px/44px "Noto Sans CJK SC", sans-serif; }
.wurl { left: 86px; bottom: 27px; font: 600 20px/24px "Open Sans", sans-serif; }
```
